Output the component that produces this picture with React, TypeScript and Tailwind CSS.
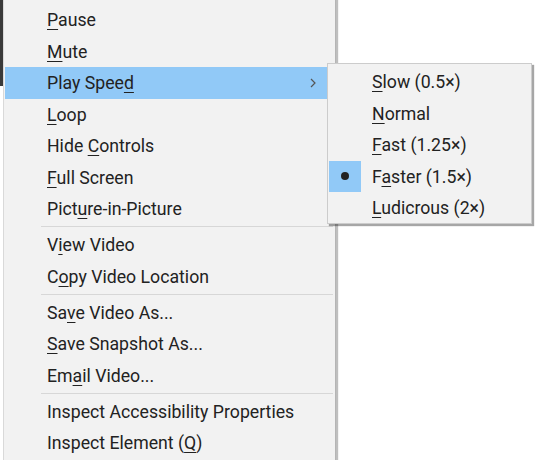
import { ReactNode } from 'react';

type Item = { label: ReactNode; sep?: false; hover?: boolean; submenu?: boolean } | { sep: true };

// underline the access key like a Windows menu
function k(before: string, key: string, after: string) {
  return (
    <>
      {before}
      <span className="underline decoration-1 underline-offset-[3px]">{key}</span>
      {after}
    </>
  );
}

const items: Item[] = [
  { label: k('', 'P', 'ause') },
  { label: k('', 'M', 'ute') },
  { label: k('Play Spee', 'd', ''), hover: true, submenu: true },
  { label: k('', 'L', 'oop') },
  { label: k('Hide ', 'C', 'ontrols') },
  { label: k('', 'F', 'ull Screen') },
  { label: k('Pict', 'u', 're-in-Picture') },
  { sep: true },
  { label: k('V', 'i', 'ew Video') },
  { label: k('C', 'o', 'py Video Location') },
  { sep: true },
  { label: k('Sa', 'v', 'e Video As...') },
  { label: k('', 'S', 'ave Snapshot As...') },
  { label: k('Em', 'a', 'il Video...') },
  { sep: true },
  { label: 'Inspect Accessibility Properties' },
  { label: k('Inspect Element (', 'Q', ')') }
];

const speeds = [
  { label: k('', 'S', 'low (0.5×)') },
  { label: k('', 'N', 'ormal') },
  { label: k('', 'F', 'ast (1.25×)') },
  { label: k('F', 'a', 'ster (1.5×)'), checked: true },
  { label: k('', 'L', 'udicrous (2×)') }
];

function Chevron() {
  return (
    <svg width="8" height="12" viewBox="0 0 8 12" className="text-[#555]">
      <path d="M2 2 L6 6 L2 10" fill="none" stroke="currentColor" strokeWidth="1.2" />
    </svg>
  );
}

export default function App() {
  return (
    <div
      className="relative flex h-[460px] w-[540px] overflow-hidden bg-white text-[17.7px] text-[#222]"
      style={{ fontFamily: 'Roboto, "Noto Sans", sans-serif' }}
    >
      <div className="flex w-[3px] flex-col">
        <div className="h-[86px] bg-[#3a3a3a]" />
      </div>

      <div className="h-[470px] w-[333px] border-x border-l-[#d9d9d9] border-r-[#b5b5b5] bg-[#f2f2f2] px-[1px] pt-[4px] shadow-[2px_0_1px_rgba(0,0,0,0.25)]">
        {items.map((item, i) =>
          item.sep ? (
            <div key={i} className="flex h-[4.5px] items-center pl-[36px] pr-[1px]">
              <div className="h-px w-full bg-[#d7d7d7]" />
            </div>
          ) : (
            <div
              key={i}
              className={`flex h-[31.5px] items-center pl-[42px] pr-[17px] pt-[3px] ${item.hover ? 'bg-[#91c9f7]' : ''}`}
            >
              <span className="flex-1 leading-none">{item.label}</span>
              {item.submenu && (
                <span className="-mt-[3px] flex">
                  <Chevron />
                </span>
              )}
            </div>
          )
        )}
      </div>

      {/* Play Speed submenu */}
      <div className="absolute left-[327px] top-[63px] h-[161px] w-[205px] border border-[#cccccc] bg-[#f2f2f2] px-[1px] pt-[2px] shadow-[2px_2px_1px_rgba(0,0,0,0.35)]">
        {speeds.map((s, i) => (
          <div key={i} className="flex h-[31.5px] items-center">
            <div
              className={`flex h-full w-[32px] items-center justify-center ${s.checked ? 'bg-[#91c9f7]' : ''}`}
            >
              {s.checked && <div className="h-[8px] w-[8px] rounded-full bg-[#222]" />}
            </div>
            <span className="ml-[11px] pt-[3px] leading-none">{s.label}</span>
          </div>
        ))}
      </div>
    </div>
  );
}
